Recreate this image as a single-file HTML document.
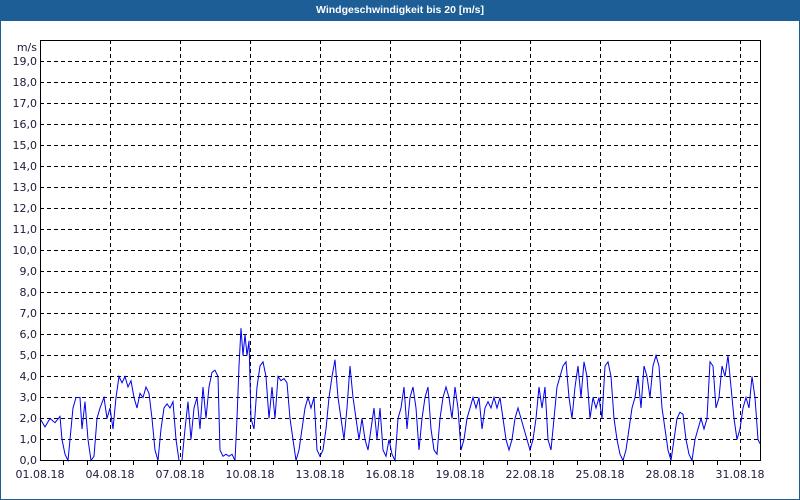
<!DOCTYPE html>
<html><head><meta charset="utf-8"><style>
html,body{margin:0;padding:0;}
body{width:800px;height:500px;background:#1d5e96;position:relative;overflow:hidden;font-family:Tahoma,"DejaVu Sans","Liberation Sans",sans-serif;}
#title{position:absolute;left:0;top:0;width:800px;height:21px;line-height:21px;color:#fff;font-weight:bold;font-size:10.5px;font-family:"Liberation Sans",sans-serif;text-align:center;}
#panel{position:absolute;left:1px;top:21px;width:798px;height:478px;background:#fff;}
svg{position:absolute;left:0;top:0;}
svg text{font-family:"DejaVu Sans","Liberation Sans",sans-serif;font-size:11px;fill:#1a1a3a;}
</style></head><body>
<div id="title">Windgeschwindigkeit bis 20 [m/s]</div>
<div id="panel"></div>
<svg width="800" height="500" viewBox="0 0 800 500">
<g stroke="#000" stroke-width="1" stroke-dasharray="4,3" shape-rendering="crispEdges">
<line x1="40" y1="61.5" x2="760" y2="61.5"/><line x1="40" y1="82.5" x2="760" y2="82.5"/><line x1="40" y1="103.5" x2="760" y2="103.5"/><line x1="40" y1="124.5" x2="760" y2="124.5"/><line x1="40" y1="145.5" x2="760" y2="145.5"/><line x1="40" y1="166.5" x2="760" y2="166.5"/><line x1="40" y1="187.5" x2="760" y2="187.5"/><line x1="40" y1="208.5" x2="760" y2="208.5"/><line x1="40" y1="229.5" x2="760" y2="229.5"/><line x1="40" y1="250.5" x2="760" y2="250.5"/><line x1="40" y1="271.5" x2="760" y2="271.5"/><line x1="40" y1="292.5" x2="760" y2="292.5"/><line x1="40" y1="313.5" x2="760" y2="313.5"/><line x1="40" y1="334.5" x2="760" y2="334.5"/><line x1="40" y1="355.5" x2="760" y2="355.5"/><line x1="40" y1="376.5" x2="760" y2="376.5"/><line x1="40" y1="397.5" x2="760" y2="397.5"/><line x1="40" y1="418.5" x2="760" y2="418.5"/><line x1="40" y1="439.5" x2="760" y2="439.5"/>
<line x1="110.5" y1="40" x2="110.5" y2="460"/><line x1="180.5" y1="40" x2="180.5" y2="460"/><line x1="250.5" y1="40" x2="250.5" y2="460"/><line x1="320.5" y1="40" x2="320.5" y2="460"/><line x1="390.5" y1="40" x2="390.5" y2="460"/><line x1="460.5" y1="40" x2="460.5" y2="460"/><line x1="530.5" y1="40" x2="530.5" y2="460"/><line x1="600.5" y1="40" x2="600.5" y2="460"/><line x1="670.5" y1="40" x2="670.5" y2="460"/><line x1="740.5" y1="40" x2="740.5" y2="460"/>
</g>
<g transform="translate(0,460.5) scale(1,-21)">
<polyline fill="none" stroke="#0000ee" stroke-width="1" vector-effect="non-scaling-stroke" points="40,2 45,1.6 50,2 55,1.8 60,2.1 62,1 65,0.3 68,0 70,1 73,2.5 76,3 80,3 82,1.5 85,2.8 88,1 91,0 94,0.2 97,2 100,2.5 104,3 107,2 110,2.5 113,1.5 116,3 119,4 122,3.7 125,4 128,3.5 131,3.8 134,3 137,2.5 140,3.2 143,3 146,3.5 149,3.2 152,2 155,0.5 158,0 161,1.5 164,2.5 167,2.7 170,2.5 173,2.8 176,1 179,0 182,0 185,1.5 188,2.8 191,1 194,2.5 197,3 200,1.5 203,3.5 206,2 209,3.5 212,4.2 215,4.3 218,4 220,0.5 223,0.2 226,0.3 229,0.2 232,0.3 235,0 237,2 239,4.5 241,6.3 243,5 245,6 247,5 249,5.7 251,2 254,1.5 257,3.5 260,4.5 263,4.7 266,4 269,2 272,3.5 275,2 278,4 281,3.8 284,3.9 287,3.7 290,2 293,1 296,0 299,0.5 302,1.5 305,2.5 308,3 311,2.5 314,3 317,0.5 320,0.2 323,0.5 326,1.5 329,3 332,4 335,4.8 338,3 341,2 344,1 347,2.5 350,4.5 353,3 356,2 359,1 362,2 365,1 368,0.5 371,1.5 374,2.5 377,1 380,2.5 383,0.5 386,0.2 389,1 392,0.3 395,0 398,2 401,2.5 404,3.5 407,1.5 410,3 413,3.5 416,2.5 419,0.5 422,2 425,3 428,3.5 431,1.5 434,0.5 437,0.3 440,2 443,3 446,3.5 449,3 452,2 455,3.5 458,2.5 461,0.5 464,1 467,2 470,2.5 473,3 476,2.5 479,3 482,1.5 485,2.5 488,2.8 491,2.5 494,3 497,2.5 500,3 503,2 506,1 509,0.5 512,1 515,2 518,2.5 521,2 524,1.5 527,1 530,0.5 533,1 536,2 539,3.5 542,2.5 545,3.5 548,1 551,0.5 554,2 557,3.5 560,4 563,4.5 566,4.7 569,3 572,2 575,3.5 578,4.5 581,3 584,4.7 587,4 590,2 593,3 596,2.5 599,3 602,2 605,4.5 608,4.7 611,4 614,2 617,1 620,0.3 623,0 626,0.5 629,1.5 632,2.5 635,3 638,4 641,2.5 644,4.5 647,4 650,3 653,4.5 656,5 659,4.5 662,2.5 665,1.5 668,0.5 671,0 674,1 677,2 680,2.3 683,2.2 686,1 689,0.3 692,0 695,1 698,1.5 701,2 704,1.5 707,2 710,4.7 713,4.5 716,2.5 719,3 722,4.5 725,4 728,5 731,3.5 734,2 737,1 740,1.5 743,2.5 746,3 749,2.5 752,4 755,3 758,1 760,0.8"/>
</g>
<rect x="40.5" y="40.5" width="720" height="420" fill="none" stroke="#000" stroke-width="1" shape-rendering="crispEdges"/>
<g stroke="#000" shape-rendering="crispEdges">
<line x1="63.5" y1="460" x2="63.5" y2="465"/><line x1="87.5" y1="460" x2="87.5" y2="465"/><line x1="110.5" y1="460" x2="110.5" y2="465"/><line x1="133.5" y1="460" x2="133.5" y2="465"/><line x1="157.5" y1="460" x2="157.5" y2="465"/><line x1="180.5" y1="460" x2="180.5" y2="465"/><line x1="203.5" y1="460" x2="203.5" y2="465"/><line x1="227.5" y1="460" x2="227.5" y2="465"/><line x1="250.5" y1="460" x2="250.5" y2="465"/><line x1="273.5" y1="460" x2="273.5" y2="465"/><line x1="297.5" y1="460" x2="297.5" y2="465"/><line x1="320.5" y1="460" x2="320.5" y2="465"/><line x1="343.5" y1="460" x2="343.5" y2="465"/><line x1="367.5" y1="460" x2="367.5" y2="465"/><line x1="390.5" y1="460" x2="390.5" y2="465"/><line x1="413.5" y1="460" x2="413.5" y2="465"/><line x1="437.5" y1="460" x2="437.5" y2="465"/><line x1="460.5" y1="460" x2="460.5" y2="465"/><line x1="483.5" y1="460" x2="483.5" y2="465"/><line x1="507.5" y1="460" x2="507.5" y2="465"/><line x1="530.5" y1="460" x2="530.5" y2="465"/><line x1="553.5" y1="460" x2="553.5" y2="465"/><line x1="577.5" y1="460" x2="577.5" y2="465"/><line x1="600.5" y1="460" x2="600.5" y2="465"/><line x1="623.5" y1="460" x2="623.5" y2="465"/><line x1="647.5" y1="460" x2="647.5" y2="465"/><line x1="670.5" y1="460" x2="670.5" y2="465"/><line x1="693.5" y1="460" x2="693.5" y2="465"/><line x1="717.5" y1="460" x2="717.5" y2="465"/><line x1="740.5" y1="460" x2="740.5" y2="465"/>
</g>
<g text-anchor="end">
<text x="37" y="51">m/s</text>
<text x="37" y="65">19,0</text><text x="37" y="86">18,0</text><text x="37" y="107">17,0</text><text x="37" y="128">16,0</text><text x="37" y="149">15,0</text><text x="37" y="170">14,0</text><text x="37" y="191">13,0</text><text x="37" y="212">12,0</text><text x="37" y="233">11,0</text><text x="37" y="254">10,0</text><text x="37" y="275">9,0</text><text x="37" y="296">8,0</text><text x="37" y="317">7,0</text><text x="37" y="338">6,0</text><text x="37" y="359">5,0</text><text x="37" y="380">4,0</text><text x="37" y="401">3,0</text><text x="37" y="422">2,0</text><text x="37" y="443">1,0</text><text x="37" y="464">0,0</text>
</g>
<g text-anchor="middle">
<text x="40" y="478">01.08.18</text><text x="110" y="478">04.08.18</text><text x="180" y="478">07.08.18</text><text x="250" y="478">10.08.18</text><text x="320" y="478">13.08.18</text><text x="390" y="478">16.08.18</text><text x="460" y="478">19.08.18</text><text x="530" y="478">22.08.18</text><text x="600" y="478">25.08.18</text><text x="670" y="478">28.08.18</text><text x="740" y="478">31.08.18</text>
</g>
</svg>
</body></html>
